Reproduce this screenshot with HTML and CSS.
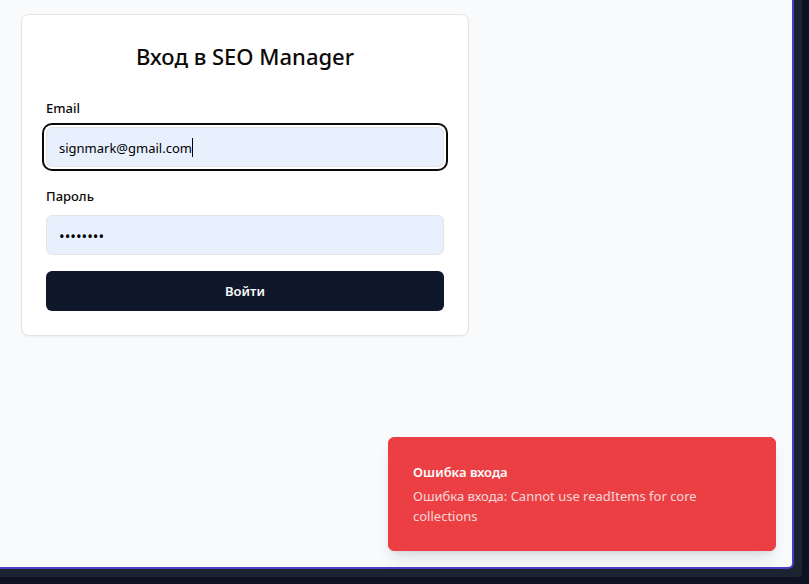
FILE: index.html
```html
<!DOCTYPE html>
<html lang="ru">
<head>
<meta charset="utf-8">
<meta name="viewport" content="width=device-width, initial-scale=1">
<title>SEO Manager</title>
<link rel="stylesheet" href="styles.css">
</head>
<body>
<div class="frame">
  <div class="screen">
    <main class="card">
      <h1 class="card-title">Вход в SEO Manager</h1>
      <form class="form">
        <div class="field">
          <label class="label" for="email">Email</label>
          <div class="control">
            <input class="input" id="email" type="text" inputmode="email" value="signmark@gmail.com" autofocus>
            <span class="caret" aria-hidden="true"></span>
          </div>
        </div>
        <div class="field">
          <label class="label" for="password">Пароль</label>
          <input class="input input-password" id="password" type="password" value="password">
        </div>
        <button class="button" type="submit">Войти</button>
      </form>
    </main>
    <div class="toast" role="alert">
      <div class="toast-title">Ошибка входа</div>
      <div class="toast-text">Ошибка входа: Cannot use readItems for core collections</div>
    </div>
  </div>
</div>
</body>
</html>
```
FILE: styles.css
```css
* { box-sizing: border-box; }

body {
  margin: 0;
  height: 100vh;
  padding: 0 7px 7px 0;
  overflow: hidden;
  background: #0d1322;
  color: #0c0a09;
  font-family: "Segoe UI", "Noto Sans", "Open Sans", sans-serif;
  font-size: 13px;
  line-height: 20px;
}

.frame {
  height: 100%;
  padding: 0 8px 8px 0;
  background: #1c2331;
  border-bottom-right-radius: 4px;
}

.screen {
  position: relative;
  height: 100%;
  padding: 14px 21px;
  background: #f9fafc;
  border: solid #4c3fc4;
  border-width: 0 2px 2px 0;
  border-bottom-right-radius: 6px;
}

.card {
  max-width: 448px;
  padding: 24px;
  background: #fff;
  border: 1px solid #e7e5e4;
  border-radius: 8px;
  box-shadow: 0 1px 2px rgba(0, 0, 0, 0.05);
}

.card-title {
  margin: 0 0 22px;
  font-size: 22px;
  font-weight: 500;
  line-height: 34px;
  text-align: center;
}

.form {
  display: flex;
  flex-direction: column;
  gap: 16px;
}

.field {
  display: flex;
  flex-direction: column;
  gap: 6px;
}

.label {
  font-weight: 500;
  line-height: 26px;
}

.control {
  position: relative;
}

.input {
  display: block;
  width: 100%;
  height: 40px;
  padding: 10px 12px 8px;
  background: #e8f0fe;
  border: 1px solid #e5e5e5;
  border-radius: 6px;
  color: #000;
  caret-color: transparent;
  font: inherit;
}

.input:focus {
  outline: none;
  box-shadow: 0 0 0 2px #fff, 0 0 0 4px #0c0a09;
}

.input-password {
  font-size: 15px;
}

.caret {
  position: absolute;
  top: 11px;
  left: 146px;
  width: 1px;
  height: 19px;
  background: #000;
}

.button {
  height: 40px;
  background: #0f172a;
  border: 0;
  border-radius: 6px;
  color: #f8fafc;
  font: inherit;
  font-weight: 600;
}

.toast {
  position: absolute;
  right: 16px;
  bottom: 16px;
  display: flex;
  flex-direction: column;
  gap: 4px;
  width: 388px;
  padding: 24px;
  background: #eb3f43;
  border: 1px solid #eb3f43;
  border-radius: 6px;
  box-shadow: 0 10px 15px -3px rgba(0, 0, 0, 0.1), 0 4px 6px -4px rgba(0, 0, 0, 0.1);
  color: #fafafa;
}

.toast-title {
  font-weight: 600;
}

.toast-text {
  max-width: 310px;
  opacity: 0.8;
}
```
